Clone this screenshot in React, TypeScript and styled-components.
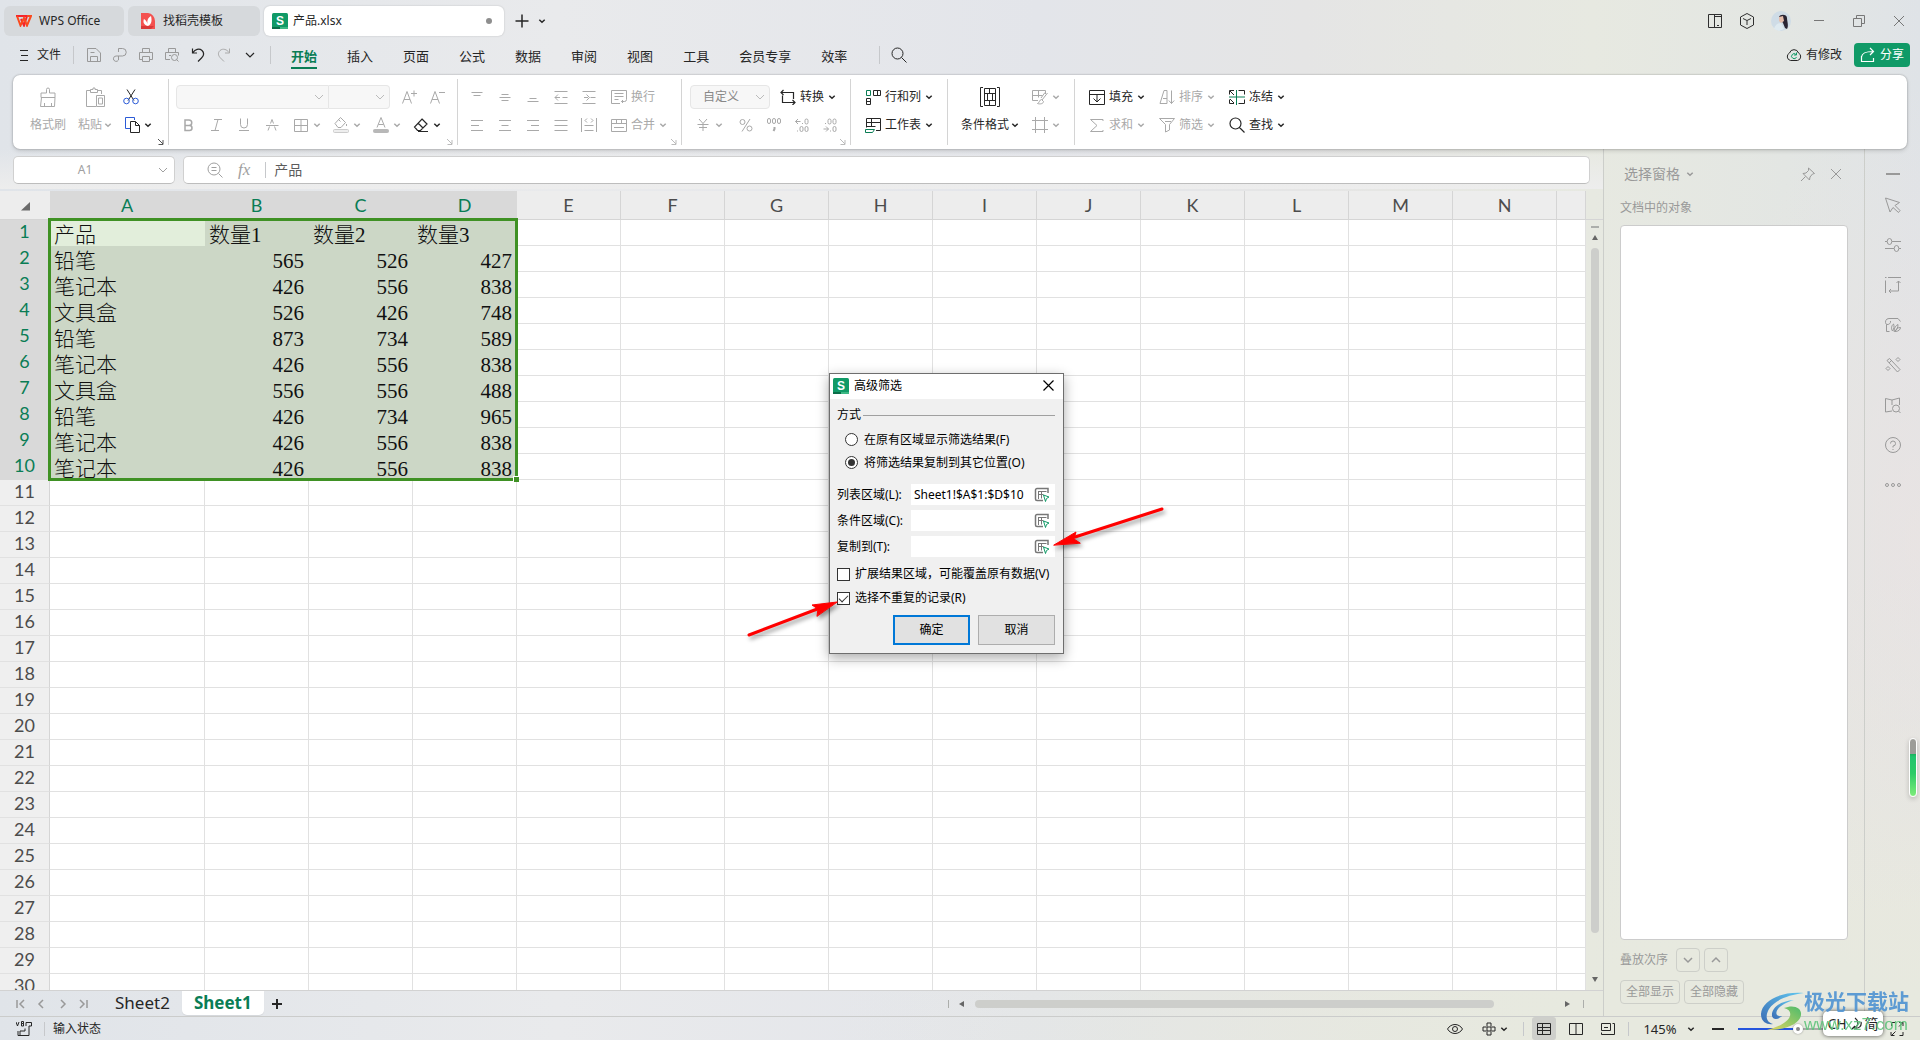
import React from "react";
import styled, { createGlobalStyle, css } from "styled-components";

const c = {
  ink: "#262626",
  soft: "#a9a9a9",
  line: "#d2d2d2",
  green: "#0a7d55",
  brand: "#109a67",
  grid: "#e1e1e1",
};
const sans = `"Noto Sans", "Noto Sans CJK SC", sans-serif`;

const Global = createGlobalStyle`
  *, *::before, *::after { box-sizing: border-box; }
  body { margin: 0; overflow: hidden; }
  button, input, select { font: inherit; color: inherit; margin: 0; padding: 0; border: 0; background: none; border-radius: 0; }
  button { cursor: pointer; }
  svg { display: block; flex: none; }
`;

/* ---------- icons ---------- */

type IconProps = { d?: string; color?: string; w?: number; h?: number; sw?: number; children?: React.ReactNode };
const Icon = ({ d, color = "currentColor", w = 16, h = 16, sw = 1, children }: IconProps) => (
  <svg width={w} height={h} viewBox={`0 0 ${w} ${h}`} fill="none" stroke={color} strokeWidth={sw} aria-hidden="true">
    {d && <path d={d} />}
    {children}
  </svg>
);

const Chevron = () => <Icon w={8} h={8} sw={1.5} d="M1.3 2.8L4 5.3l2.7-2.5" />;
const WideChevron = () => <Icon w={10} h={8} d="M1 2l4 4 4-4" />;

const p = {
  save: "M1.5 1.5h8.5l4.5 4.5v8.5h-13z M4.5 14.5v-5h7v5 M4.5 5.5h4",
  send: "M6.5 5V1.5h4a3.7 3.7 0 0 1 0 7.5H4.2a2.7 2.7 0 1 0 2.3 4V9",
  print: "M4.5 5.5v-4h7v4 M4.5 12.5h-3v-7h13v7h-3 M4.5 9.5h7v5h-7z",
  preview: "M4.5 5.5v-4h7v4 M6 12.5H1.5v-7h13v3 M5 8.5h2 M14.5 14.5l-2-2",
  undo: "M2.5 1.5v4.5h4.5 M3 5.5C5 2.5 9 1 12 3.5c3 3 1 6-.5 7.5L8 14.5",
  redo: "M13.5 1.5v4.5H9 M13 5.5C11 2.5 7 1 4 3.5c-3 3-1 6 .5 7.5L8 14.5",
  search: "M6.5 1a5.5 5.5 0 1 0 0 11 5.5 5.5 0 1 0 0-11z M10.5 10.5l5 5",
  top: "M2.5 3.5h11 M4.5 6.5h7",
  middle: "M2.5 8.5h11 M4.5 5.5h7 M4.5 11.5h7",
  bottom: "M2.5 12.5h11 M4.5 9.5h7",
  outdent: "M1.5 2.5h13 M1.5 14.5h13 M2 8.5h5 M9.5 8.5h5 M5 5.5l-3 3 3 3",
  indent: "M1.5 2.5h13 M1.5 14.5h13 M3 8.5h4 M9.5 8.5h5 M5.5 5.5l3 3-3 3",
  left: "M2 3.5h12 M2 8.5h8 M2 13.5h12",
  center: "M2 3.5h12 M4.5 8.5h7 M2 13.5h12",
  right: "M2 3.5h12 M6 8.5h8 M2 13.5h12",
  justify: "M1.5 3.5h13 M1.5 8.5h13 M1.5 13.5h13",
  spread: "M.5 1v14 M15.5 1v14 M3.5 8.5h9 M3.5 13.5h9 M6 1.5l-2 2 2 2 M10 1.5l2 2-2 2",
  wrap: "M9 14.5H.5v-13h15v9a2 2 0 0 1-2 2h-3 M12 11l-1.5 1.5L12 14 M3.5 4.5h9 M3.5 7.5h9 M3.5 10.5h4",
  merge: "M.5 2.5h15v12H.5z M.5 6.5h15 M5.5 2.5v4 M10.5 2.5v4 M3 10.5h10",
  convert: "M1 3.5h12.5v4 M3.5 1L1 3.5 3.5 6 M15 13.5H2.5V6.5 M12.5 11l2.5 2.5-2.5 2.5 M13.5 7v3",
  yen: "M4 2l4 4.5L12 2 M2.5 7.5h11 M8 6.5V14 M4 10.5h8",
  rowsB: "M8.5 1.5h7v5h-7z M12.5 1.5v5 M1.5 9.5h4v6h-4z M1.5 12.5h4",
  sheet: "M1.5 10.5V1.5h14v12H11 M1.5 5.5h14 M6.5 1.5v8 M1.5 9.5h9",
  fill: "M.5 1.5h15v14H.5z M.5 5.5h15 M8 6v7 M4.5 9.5L8 13l3.5-3.5",
  sort: "M5 1.5h3v13 M5 1.5L1 14.5h7 M4 9.5h4 M12.5 1.5v13 M9.8 11.5l2.7 3 2.7-3",
  sum: "M14 4V2.5H1.5L8 8.5l-6.5 6H14V13",
  funnel: "M.5 1.5h15l-5 6V13l-4 2V7.5z M6 4.5h6",
  crop: "M3.5 0v16 M12.5 0v16 M0 3.5h16 M0 12.5h16",
  borders: "M1.5 2.5h13v12h-13z M8 2.5v12 M1.5 8.5h13",
};

const SLogo = () => (
  <svg width="16" height="16" viewBox="0 0 16 16" aria-hidden="true">
    <rect width="16" height="16" rx="1.5" fill={c.brand} />
    <rect y="14" width="8" height="2" fill="#0a6e49" />
    <rect x="8" y="14" width="8" height="2" fill="#3db884" />
    <text x="8" y="11.5" textAnchor="middle" fontFamily="Liberation Sans, sans-serif" fontWeight="700" fontSize="12" fill="#fff">S</text>
  </svg>
);

/* ---------- shell ---------- */

const Shell = styled.div`
  height: 100vh;
  display: flex;
  flex-direction: column;
  font: 12px/16px ${sans};
  color: ${c.ink};
  background:
    radial-gradient(ellipse 220px 460px at 100% 52%, #ede4e1aa, transparent),
    radial-gradient(ellipse 1100px 520px at 100% 105%, #e7e9df 35%, transparent),
    linear-gradient(to right, #e0e4e9 0, #e9eaec 29%, #e3e5ea 54%, #e5e5e5 68%, #e7e9e1 83%, #e3e6e3 93%, #dfe3e7 100%);
`;

const TabBar = styled.header`
  display: flex;
  align-items: center;
  gap: 4px;
  height: 36px;
  padding: 6px 0 0 4px;
`;
const DocTab = styled.button<{ $w: number; $active?: boolean }>`
  width: ${(q) => q.$w}px;
  height: 30px;
  display: flex;
  align-items: center;
  gap: 7px;
  padding: 0 12px;
  border-radius: 6px;
  background: ${(q) => (q.$active ? "#fff" : "#d6d9dc")};
  ${(q) => q.$active && css`padding: 0 12px 0 8px; gap: 5px; box-shadow: 0 0 2px #0003;`}
`;
const Dot = styled.i`
  width: 6px;
  height: 6px;
  margin-left: auto;
  border-radius: 50%;
  background: #8e8e8e;
`;
const TabTools = styled.div`
  display: flex;
  align-items: center;
  gap: 8px;
  padding-left: 6px;
`;
const Plain = styled.button`
  display: flex;
  align-items: center;
  justify-content: center;
`;
const WindowTools = styled.div`
  display: flex;
  align-items: center;
  gap: 16px;
  margin-left: auto;
  padding-right: 9px;
  color: #2f2f2f;
`;
const Caption = styled(Plain)`
  width: 24px;
  color: #777;
`;

const MenuBar = styled.nav`
  display: flex;
  align-items: center;
  height: 39px;
  padding: 0 10px 1px 19px;
`;
const FileButton = styled(Plain)`
  gap: 8px;
`;
const Rule = styled.i<{ $l?: number; $r?: number; $h?: number }>`
  width: 1px;
  height: ${(q) => q.$h ?? 18}px;
  margin: 0 ${(q) => q.$r ?? 0}px 0 ${(q) => q.$l ?? 0}px;
  background: #c6c8cb;
`;
const QuickTools = styled.div`
  display: flex;
  gap: 10px;
`;
const Menus = styled.div`
  display: flex;
  gap: 30px;
  font-size: 13px;
`;
const MenuItem = styled.button<{ $on?: boolean }>`
  height: 28px;
  padding-top: 3px;
  border-bottom: 2px solid ${(q) => (q.$on ? c.green : "transparent")};
  ${(q) => q.$on && css`color: ${c.green}; font-weight: 700;`}
`;
const MenuRight = styled.div`
  display: flex;
  align-items: center;
  gap: 12px;
  margin-left: auto;
`;
const Changes = styled(Plain)`
  gap: 4px;
`;
const Share = styled(Plain)`
  width: 56px;
  height: 24px;
  gap: 4px;
  border-radius: 4px;
  background: ${c.brand};
  color: #fff;
`;

/* ---------- ribbon ---------- */

const Ribbon = styled.section`
  position: relative;
  z-index: 2;
  display: flex;
  height: 74px;
  margin: 0 13px;
  padding: 4px 0;
  border-radius: 7px;
  background: #fff;
  box-shadow: 0 0 2px #0005, 0 2px 4px #0002;
`;
const Group = styled.div<{ $pl: number; $w?: number }>`
  position: relative;
  display: flex;
  width: ${(q) => (q.$w ? q.$w + "px" : "auto")};
  padding: 4px 0 0 ${(q) => q.$pl}px;
  border-right: ${(q) => (q.$w ? "1px solid #d4d4d4" : "0")};
`;
const Rows = styled.div`
  display: flex;
  flex-direction: column;
`;
const Row = styled.div<{ $pl?: number }>`
  display: flex;
  align-items: center;
  height: 28px;
  padding-left: ${(q) => q.$pl ?? 0}px;
`;
const Tool = styled.button<{ $w?: number; $pl?: number; $on?: boolean }>`
  display: flex;
  align-items: center;
  gap: 4px;
  width: ${(q) => (q.$w ? q.$w + "px" : "auto")};
  height: 28px;
  padding-left: ${(q) => q.$pl ?? 0}px;
  white-space: nowrap;
  color: ${(q) => (q.$on ? c.ink : c.soft)};
`;
const Square = styled(Tool)`
  width: 28px;
  justify-content: center;
`;
const Tall = styled.button<{ $w: number; $on?: boolean }>`
  display: grid;
  grid-template-rows: 28px 28px;
  place-items: center;
  width: ${(q) => q.$w}px;
  color: ${(q) => (q.$on ? c.ink : c.soft)};
`;
const TallLabel = styled.span`
  display: flex;
  align-items: center;
  gap: 2px;
  white-space: nowrap;
`;
const Launcher = styled.button<{ $on?: boolean }>`
  position: absolute;
  right: 4px;
  bottom: 0;
  color: ${(q) => (q.$on ? "#555" : "#bbb")};
`;
const Combo = styled.label<{ $w: number; $side?: "l" | "r" }>`
  position: relative;
  display: flex;
  align-items: center;
  width: ${(q) => q.$w}px;
  height: 24px;
  border: 1px solid #e6e6e6;
  border-radius: ${(q) => (q.$side === "l" ? "4px 0 0 4px" : q.$side === "r" ? "0 4px 4px 0" : "4px")};
  border-left-width: ${(q) => (q.$side === "r" ? 0 : 1)}px;
  background: #f7f7f7;
  color: #bbb;
  select {
    appearance: none;
    width: 100%;
    height: 22px;
    padding-left: 12px;
    color: #888;
  }
  svg {
    position: absolute;
    right: 4px;
    pointer-events: none;
  }
`;

const Corner = ({ on }: { on?: boolean }) => (
  <Launcher $on={on} aria-label="更多设置">
    <Icon w={7} h={7} d="M1 1l5 5 M6 2v4.5H1.5" />
  </Launcher>
);

const RibbonBar = () => (
  <Ribbon>
    <Group $w={156} $pl={11}>
      <Tall $w={48}>
        <Icon w={18} h={20} d="M7.5 6V2.5a1.5 1.5 0 0 1 3 0V6h5.5v4.5H2V6z M2.5 10.5L1.5 19.5h14l.5-9 M5.5 19v-3 M12.5 19v-3" />
        格式刷
      </Tall>
      <Tall $w={46}>
        <Icon w={20} h={20} d="M11 19.5H1.5v-16h4 M12.5 3.5h4V7 M5.5 5.5v-3h2.5v-1.5h2v1.5h2.5v3z M11.5 8.5h8v11h-8z M13.5 11h4v6h-4z" />
        <TallLabel>粘贴<Chevron /></TallLabel>
      </Tall>
      <Rows>
        <Tool $on $pl={5} aria-label="剪切">
          <Icon>
            <path d="M4 .5l7 11 M12 .5L5 11.5" />
            <g stroke="#2b5bd7"><circle cx="3.5" cy="12" r="2.8" /><circle cx="12.5" cy="12" r="2.8" /></g>
          </Icon>
        </Tool>
        <Tool $on $pl={6} aria-label="复制">
          <Icon>
            <path d="M6 11.5H1.5V.5h9V3" stroke="#2b5bd7" />
            <path d="M6.5 4.5h5l4 4v7h-9z M11.5 4.5v4h4" />
          </Icon>
          <Chevron />
        </Tool>
      </Rows>
      <Corner on />
    </Group>

    <Group $w={289} $pl={5}>
      <Rows>
        <Row $pl={2}>
          <Combo $w={153} $side="l"><select aria-label="字体"><option /></select><WideChevron /></Combo>
          <Combo $w={61} $side="r"><select aria-label="字号"><option /></select><WideChevron /></Combo>
          <Row $pl={5}>
            <Square aria-label="增大字号"><Icon d="M1.5 14.5l4.5-12 4.5 12 M3 10.5h6 M10 4.5h6 M13 1.5v6" /></Square>
            <Square aria-label="减小字号"><Icon d="M1.5 14.5l4.5-12 4.5 12 M3 10.5h6 M10 3.5h6" /></Square>
          </Row>
        </Row>
        <Row>
          <Square aria-label="加粗"><Icon sw={1.5} d="M5 3h4a2.5 2.5 0 0 1 0 5.5H5z M5 8.5h4.5a2.5 2.5 0 0 1 0 5H5z" /></Square>
          <Square aria-label="倾斜"><Icon d="M6 2.5h8 M3 13.5h8 M10 2.5l-3 11" /></Square>
          <Square aria-label="下划线"><Icon d="M4.5 1.5v6a3.5 3.5 0 0 0 7 0v-6 M3 13.5h10" /></Square>
          <Square aria-label="删除线"><Icon d="M2 8.5h12.5 M4 13.5l1.5-4 M12 13.5l-1.5-4 M6.5 6.5L8 2.5l1.5 4" /></Square>
          <Tool $w={40} $pl={7} aria-label="边框"><Icon d={p.borders} /><Chevron /></Tool>
          <Tool $w={40} $pl={7} aria-label="填充颜色">
            <Icon><path d="M7.500.5l5 5-4.500 5h-3l-3-4z M5.500 2.500l2 2 M13.500 7v2" /><rect x=".5" y="12.5" width="15" height="3" rx="1" fill="#eee" stroke="#ccc" /></Icon><Chevron />
          </Tool>
          <Tool $w={40} $pl={7} aria-label="字体颜色">
            <Icon><path d="M4 10.500L8 .500l4 10 M5.500 7.500h5" /><rect x=".5" y="12.5" width="15" height="3" rx="1" fill="#b8b8b8" stroke="#b8b8b8" /></Icon><Chevron />
          </Tool>
          <Tool $on $w={40} $pl={7} aria-label="清除">
            <Icon d="M9 2l5 5-6.500 6.500h-3L1.500 10z M5 6l5 5 M5 14.500h10" sw={1.2} /><Chevron />
          </Tool>
        </Row>
      </Rows>
      <Corner />
    </Group>

    <Group $w={224} $pl={5}>
      <Rows>
        <Row>
          {[["顶端对齐", p.top], ["垂直居中", p.middle], ["底端对齐", p.bottom], ["减少缩进", p.outdent], ["增加缩进", p.indent]].map(([l, d]) => (
            <Square key={l} aria-label={l}><Icon d={d} /></Square>
          ))}
          <Tool $pl={8}><Icon d={p.wrap} />换行</Tool>
        </Row>
        <Row>
          {[["左对齐", p.left], ["居中", p.center], ["右对齐", p.right], ["两端对齐", p.justify], ["分散对齐", p.spread]].map(([l, d]) => (
            <Square key={l} aria-label={l}><Icon d={d} /></Square>
          ))}
          <Tool $pl={8}><Icon d={p.merge} />合并<Chevron /></Tool>
        </Row>
      </Rows>
      <Corner />
    </Group>

    <Group $w={169} $pl={8}>
      <Rows>
        <Row>
          <Combo $w={80}><select aria-label="数字格式"><option>自定义</option></select><WideChevron /></Combo>
          <Tool $on $pl={10}><Icon d={p.convert} sw={1.2} />转换<Chevron /></Tool>
        </Row>
        <Row>
          <Tool $w={42} $pl={5} aria-label="货币"><Icon d={p.yen} /><Chevron /></Tool>
          <Square aria-label="百分比"><Icon><circle cx="4.5" cy="5" r="2.5" /><circle cx="11.5" cy="11.5" r="2.5" /><path d="M12 2L4 14.5" /></Icon></Square>
          <Square aria-label="千位分隔"><Icon><rect x="1.5" y="1.5" width="3" height="5" rx="1.5" /><rect x="6.5" y="1.5" width="3" height="5" rx="1.5" /><rect x="11.5" y="1.5" width="3" height="5" rx="1.5" /><path d="M8.500 10v2l-1 2" strokeWidth="2" /></Icon></Square>
          <Square aria-label="增加小数"><Icon><path d="M1.500 4.500h5 M4 2L1.500 4.500 4 7 M8.500 6v1 M3.500 13.500v1" /><rect x="11" y="2" width="3" height="5" rx="1.5" /><rect x="6" y="9.5" width="3" height="5" rx="1.5" /><rect x="11" y="9.5" width="3" height="5" rx="1.5" /></Icon></Square>
          <Square aria-label="减少小数"><Icon><path d="M1.500 12h5 M4 9.500L6.500 12 4 14.500 M3.500 6v1 M8.500 13.500v1" /><rect x="6" y="2" width="3" height="5" rx="1.5" /><rect x="11" y="2" width="3" height="5" rx="1.5" /><rect x="11" y="9.5" width="3" height="5" rx="1.5" /></Icon></Square>
        </Row>
      </Rows>
      <Corner />
    </Group>

    <Group $w={97} $pl={14}>
      <Rows>
        <Tool $on><Icon><path d={p.rowsB} /><path d="M1.500 1.500h4v5h-4z" stroke={c.green} /></Icon>行和列<Chevron /></Tool>
        <Tool $on><Icon><path d={p.sheet} /><path d="M.500 12.500h9l-2 3h-7z" stroke={c.green} /></Icon>工作表<Chevron /></Tool>
      </Rows>
    </Group>

    <Group $w={127} $pl={12}>
      <Tall $w={60} $on>
        <Icon w={20} h={20} d="M3 .5H.5v19H3 M17 .5h2.5v19H17 M4.500 1.500h11v17h-11z M4.500 6.500h11 M4.500 13.500h11 M9.500 1.500v5 M12.500 6.500v7 M7.500 6.500v7 M9.500 13.500v5" />
        <TallLabel>条件格式<Chevron /></TallLabel>
      </Tall>
      <Rows>
        <Tool $pl={12} aria-label="表格样式"><Icon d="M6 11.500H.500v-10h13V5 M.500 6.500h10 M6.500 1.500v7 M15.500 4l-5.500 7 M13 3.500l-4 5.500 M9.500 10.500c-2 0-2 3.500-4 4 3 1 6 0 6-2z" /><Chevron /></Tool>
        <Tool $pl={12} aria-label="单元格样式"><Icon d={p.crop} /><Chevron /></Tool>
      </Rows>
    </Group>

    <Group $pl={14}>
      <Rows>
        <Row>
          <Tool $on $w={70}><Icon d={p.fill} />填充<Chevron /></Tool>
          <Tool $w={70}><Icon d={p.sort} />排序<Chevron /></Tool>
          <Tool $on $w={70}>
            <Icon><path d="M.500 5.500v-4h4.500 M1 2l4 4 M9.500 1.500h6v4 M.500 10.500v4h4.500 M1 10l4 4 M15.500 10.500v4h-6" /><path d="M0 8h16 M7.500 1v15" stroke={c.green} /></Icon>冻结<Chevron />
          </Tool>
        </Row>
        <Row>
          <Tool $w={70}><Icon d={p.sum} />求和<Chevron /></Tool>
          <Tool $w={70}><Icon d={p.funnel} />筛选<Chevron /></Tool>
          <Tool $on $w={70}><Icon d={p.search} sw={1.2} />查找<Chevron /></Tool>
        </Row>
      </Rows>
    </Group>
  </Ribbon>
);

/* ---------- work area ---------- */

const Body = styled.div`
  flex: 1;
  min-height: 0;
  display: flex;
`;
const Work = styled.main`
  flex: 1;
  min-width: 0;
  display: flex;
  flex-direction: column;
  background: linear-gradient(to bottom, transparent, #ededed 40px, transparent 40px);
`;
const FormulaBar = styled.div`
  display: flex;
  gap: 8px;
  height: 42px;
  padding: 7px 13px;
`;
const Field = styled.label<{ $w?: number }>`
  position: relative;
  display: flex;
  align-items: center;
  ${(q) => (q.$w ? `width: ${q.$w}px;` : "flex: 1;")}
  height: 28px;
  border: 1px solid #d0d0d0;
  border-bottom-color: #bdbdbd;
  border-radius: 5px;
  background: #fff;
  color: #a0a0a0;
  input { min-width: 0; flex: 1; outline: 0; }
`;
const NameInput = styled.input`
  text-align: center;
  padding-right: 18px;
`;
const FormulaInput = styled.input`
  font-size: 14px;
  line-height: 20px;
  color: #5c5c5c;
`;
const FieldTools = styled.span`
  display: flex;
  align-items: center;
  gap: 15px;
  padding: 0 8px 0 23px;
`;
const Fx = styled.em`
  font: italic 17px/16px "Liberation Serif", serif;
`;
const NameArrow = styled.span`
  position: absolute;
  right: 6px;
`;

const SheetArea = styled.div`
  flex: 1;
  min-height: 0;
  display: flex;
  border-bottom: 1px solid ${c.line};
`;
const Grid = styled.div`
  position: relative;
  flex: 1;
  min-width: 0;
  overflow: hidden;
`;
const Table = styled.table`
  width: 100%;
  table-layout: fixed;
  border-collapse: separate;
  border-spacing: 0;
  background: #fff;
`;
const HeadCell = styled.th<{ $sel?: boolean }>`
  height: 29px;
  padding: 0;
  border-right: 1px solid ${(q) => (q.$sel ? "#d9d9d9" : "#d5d5d5")};
  border-bottom: 1px solid #d5d5d5;
  background: ${(q) => (q.$sel ? "#d9d9d9" : "#ededed")};
  color: ${(q) => (q.$sel ? c.green : "#4c4c4c")};
  font: 400 18px/24px Lato, sans-serif;
`;
const RowHead = styled.th<{ $sel?: boolean }>`
  height: 26px;
  padding: 0 0 3px;
  border-right: 1px solid #d5d5d5;
  background: ${(q) => (q.$sel ? "#d9d9d9" : "#efefef")};
  border-bottom: 1px solid ${(q) => (q.$sel ? "#d9d9d9" : c.grid)};
  color: ${(q) => (q.$sel ? c.green : "#4c4c4c")};
  font: 400 18px/22px Lato, sans-serif;
`;
const CornerHead = styled(HeadCell)`
  border-right-color: #ededed;
  svg { margin: 2px 0 0 21px; }
`;
const Cell = styled.td<{ $fill?: string; $num?: boolean }>`
  height: 26px;
  padding: 5px 4px 0;
  overflow: hidden;
  border-right: 1px solid ${(q) => q.$fill ?? c.grid};
  border-bottom: 1px solid ${(q) => q.$fill ?? c.grid};
  background: ${(q) => q.$fill ?? "#fff"};
  color: #111;
  font: 300 21px/20px "Liberation Serif", "Noto Sans CJK SC", serif;
  text-align: ${(q) => (q.$num ? "right" : "left")};
  white-space: nowrap;
`;
const Selection = styled.div`
  position: absolute;
  left: 48px;
  top: 27px;
  width: 470px;
  height: 263px;
  border: 3px solid #3f9124;
  pointer-events: none;
  &::after {
    content: "";
    position: absolute;
    right: -4px;
    bottom: -4px;
    width: 6px;
    height: 6px;
    border: solid #fff;
    border-width: 1px 0 0 1px;
    background: #3f9124;
  }
`;
const VScroll = styled.div`
  display: flex;
  flex-direction: column;
  align-items: center;
  gap: 7px;
  width: 17px;
  margin-top: 28px;
  padding: 6px 0 8px;
  border-top: 1px solid #d5d5d5;
`;
const Thumb = styled.div<{ $v?: boolean }>`
  ${(q) => (q.$v ? "width: 8px; flex: 0 1 685px;" : "height: 8px; width: 519px;")}
  border-radius: 4px;
  background: #cdcecb;
`;
const Dash = styled.i<{ $v?: boolean }>`
  width: ${(q) => (q.$v ? 1 : 8)}px;
  height: ${(q) => (q.$v ? 8 : 2)}px;
  flex: none;
  background: #acaeab;
`;
const Push = styled.i`
  flex: 1;
`;
const Tri = ({ d }: { d: string }) => (
  <svg width="6" height="6" viewBox="0 0 6 6" fill="#666" aria-hidden="true"><path d={d} /></svg>
);

const SheetBar = styled.div`
  display: flex;
  align-items: center;
  height: 25px;
`;
const SheetNav = styled.div`
  display: flex;
  gap: 11px;
  padding: 0 15px 0 15px;
  color: #999;
`;
const SheetTab = styled.button<{ $on?: boolean }>`
  align-self: flex-start;
  height: 24px;
  padding: 0 12px;
  border-radius: 0 0 5px 5px;
  font-size: 17px;
  line-height: 22px;
  ${(q) => q.$on && css`background: #fff; color: ${c.green}; font-weight: 700; box-shadow: 0 1px 1px #0001;`}
`;
const AddSheet = styled(Plain)`
  padding: 0 8px;
`;
const HScroll = styled.div`
  display: flex;
  align-items: center;
  gap: 10px;
  margin-left: auto;
  padding-right: 19px;
`;
const HEnd = styled.span`
  display: flex;
  align-items: center;
  gap: 13px;
  padding-left: 60px;
`;

const DATA: (string | number)[][] = [
  ["产品", "数量1", "数量2", "数量3"],
  ["铅笔", 565, 526, 427],
  ["笔记本", 426, 556, 838],
  ["文具盒", 526, 426, 748],
  ["铅笔", 873, 734, 589],
  ["笔记本", 426, 556, 838],
  ["文具盒", 556, 556, 488],
  ["铅笔", 426, 734, 965],
  ["笔记本", 426, 556, 838],
  ["笔记本", 426, 556, 838],
];
const COLS = "ABCDEFGHIJKLMN".split("");

const SheetGrid = () => (
  <Grid>
    <Table>
      <colgroup>
        <col width={50} />
        <col width={155} />
        {COLS.slice(1).map((k) => <col key={k} width={104} />)}
        <col />
      </colgroup>
      <thead>
        <tr>
          <CornerHead aria-label="全选">
            <svg width="9" height="9" viewBox="0 0 9 9" fill="#6a6a6a" aria-hidden="true"><path d="M9 0v8.500H0z" /></svg>
          </CornerHead>
          {COLS.map((k, i) => <HeadCell key={k} $sel={i < 4} scope="col">{k}</HeadCell>)}
          <HeadCell aria-label="O" />
        </tr>
      </thead>
      <tbody>
        {Array.from({ length: 30 }, (_, r) => (
          <tr key={r}>
            <RowHead $sel={r < 10} scope="row">{r + 1}</RowHead>
            {COLS.concat("O").map((k, i) => {
              const v = DATA[r]?.[i];
              const fill = v === undefined ? undefined : r + i === 0 ? "#e2eedb" : "#ccd7c6";
              return <Cell key={k} $fill={fill} $num={typeof v === "number"}>{v}</Cell>;
            })}
          </tr>
        ))}
      </tbody>
    </Table>
    <Selection />
  </Grid>
);

/* ---------- selection pane & side rail ---------- */

const Pane = styled.aside`
  width: 262px;
  display: flex;
  flex-direction: column;
  padding: 13px 16px 12px 16px;
  border: solid #ccceca;
  border-width: 0 1px;
  color: #999;
`;
const PaneHead = styled.div`
  display: flex;
  align-items: center;
  gap: 6px;
  height: 24px;
  padding: 0 4px;
  font-size: 14px;
`;
const PaneTools = styled.span`
  display: flex;
  gap: 12px;
  margin-left: auto;
`;
const PaneLabel = styled.div`
  padding: 14px 0 9px;
`;
const ObjectList = styled.div`
  flex: 1;
  border: 1px solid #ccc;
  border-radius: 4px;
  background: #fff;
`;
const PaneRow = styled.div`
  display: flex;
  align-items: center;
  gap: 4px;
  margin-top: 8px;
`;
const OrderLabel = styled.span`
  margin-right: 4px;
`;
const PaneButton = styled(Plain)<{ $w: number }>`
  width: ${(q) => q.$w}px;
  height: 24px;
  border: 1px solid #cdcfc9;
  border-radius: 4px;
`;
const Rail = styled.aside`
  width: 55px;
  display: flex;
  flex-direction: column;
  align-items: center;
  gap: 16px;
  padding-top: 16px;
  color: #999;
`;
const RailList = styled.div`
  display: flex;
  flex-direction: column;
  gap: 24px;
`;

const RAIL: [string, React.ReactNode][] = [
  ["选择", <Icon d="M.500 1l14 4.500-4.500 3 5 5-1.500 2-5.500-5-3 4.500z" />],
  ["属性", <Icon><path d="M0 4.500h2 M7 4.500h9 M0 11.500h9 M14 11.500h2" /><ellipse cx="4.5" cy="4.5" rx="2.3" ry="3" /><ellipse cx="11.5" cy="11.5" rx="2.3" ry="3" /></Icon>],
  ["分析", <Icon d="M.500 3.500V16 M0 .500h1.500 M3 .500h13 M13.500 4v10H4 M11.500 6l2-2 2 2 M6 12l-2 2 2 2" />],
  ["图表", <Icon d="M1.500 7.500V14.500h3 M1.500 7.500A3.500 3.500 0 0 1 4 1.500h9l2.500 3 M1.500 7.500C4 8 6 6 5.500 4 M7.500 14c-2-3-.500-6 1-7 1 2 .500 5-1 7z M9 14.500c0-4 2-6 4-7 0 3-1 6-4 7z M10 14.500c1-3 3-4 5.500-4 0 2-2 4-5.500 4z" />],
  ["工具", <Icon d="M2 3.500L4.500 1.500 15 12.500 12.500 15z M4 6l3-3 M11 2.500l2-2 2 2-2 2z M1 11.500l2-2 2 2-2 2z" />],
  ["资料", <Icon><path d="M7 14L.500 15V1.500L7 3v5 M7 3l7.500-2v7" /><circle cx="11" cy="11.5" r="3.5" /><path d="M13.500 14l2 2" /></Icon>],
  ["帮助", <Icon><circle cx="8" cy="8" r="7.5" /><path d="M5.500 6.500a2.500 2.500 0 1 1 2.500 2.500v1.500 M8 12v1" /></Icon>],
  ["更多", <Icon><circle cx="2" cy="8" r="1.5" /><circle cx="8" cy="8" r="1.5" /><circle cx="14" cy="8" r="1.5" /></Icon>],
];

/* ---------- status bar ---------- */

const Status = styled.footer`
  display: flex;
  align-items: center;
  height: 24px;
  padding: 0 15px 0 16px;
  border-top: 1px solid #cbcccb;
`;
const StatusRight = styled.div`
  display: flex;
  align-items: center;
  margin-left: auto;
`;
const StatusTool = styled(Plain)<{ $w: number; $on?: boolean }>`
  width: ${(q) => q.$w}px;
  height: 23px;
  gap: 4px;
  border-radius: 3px;
  background: ${(q) => (q.$on ? "#cecfcb" : "none")};
`;
const ZoomValue = styled(StatusTool)`
  gap: 10px;
  font-size: 13px;
`;
const Zoom = styled.input`
  appearance: none;
  width: 120px;
  height: 12px;
  margin: 0 31px 0 8px;
  background: linear-gradient(to right, #2555dd 50%, #a9aaa8 50%) center / 100% 2px no-repeat;
  &::-webkit-slider-thumb {
    appearance: none;
    width: 10px;
    height: 10px;
    border-radius: 50%;
    border: 3px solid #fff;
    background: #888;
    box-shadow: 0 0 2px #0006;
  }
`;

/* ---------- dialog ---------- */

const Canvas = styled.div`
  position: absolute;
  z-index: 5;
  left: calc(50% - 230px);
  top: calc(50% - 160px);
  width: 450px;
  height: 310px;
`;
const Dialog = styled.form`
  position: absolute;
  left: 99px;
  top: 13px;
  width: 235px;
  border: 1px solid #6e6e6e;
  background: #f0f0f0;
  color: #000;
  box-shadow: 0 4px 12px #0005;
`;
const DialogTitle = styled.div`
  display: flex;
  align-items: center;
  gap: 5px;
  height: 25px;
  padding: 0 9px 2px 3px;
  background: #fff;
`;
const CloseX = styled(Plain)`
  margin-left: auto;
`;
const DialogBody = styled.div`
  display: flex;
  flex-direction: column;
  padding: 7px 8px 8px 7px;
`;
const Legend = styled.div`
  display: flex;
  align-items: center;
  gap: 2px;
  height: 18px;
  &::after { content: ""; flex: 1; height: 1px; background: #a0a0a0; }
`;
const Choices = styled.div<{ $pl?: number; $h: number }>`
  padding: 4px 0 4px ${(q) => q.$pl ?? 0}px;
  label {
    display: flex;
    align-items: center;
    gap: 5px;
    height: ${(q) => q.$h}px;
    white-space: nowrap;
  }
`;
const Mark = styled.input`
  appearance: none;
  flex: none;
  display: grid;
  place-items: center;
  width: 13px;
  height: 13px;
  border: 1px solid #333;
  background: #fff;
  &[type="radio"] { border-radius: 50%; margin-right: 1px; }
  &[type="radio"]:checked::after { content: ""; width: 7px; height: 7px; border-radius: 50%; background: #333; }
  &[type="checkbox"]:checked::after { content: ""; width: 9px; height: 5px; border: solid #333; border-width: 0 0 1px 1px; transform: translateY(-1px) rotate(-45deg); }
`;
const Ranges = styled.div`
  display: flex;
  flex-direction: column;
  gap: 5px;
  padding: 6px 0 1px;
`;
const RangeRow = styled.div`
  display: flex;
  align-items: center;
  height: 21px;
  label { width: 74px; white-space: nowrap; }
`;
const RangeBox = styled.span`
  display: flex;
  align-items: center;
  flex: 1;
  min-width: 0;
  height: 21px;
  padding: 0 5px 0 3px;
  background: #fff;
  input { flex: 1; min-width: 0; outline: 0; }
`;
const Actions = styled.div`
  display: flex;
  justify-content: flex-end;
  gap: 8px;
  padding-top: 1px;
`;
const DialogButton = styled.button<{ $main?: boolean }>`
  width: 77px;
  height: 30px;
  border: ${(q) => (q.$main ? "2px solid #0078d7" : "1px solid #adadad")};
  background: #e1e1e1;
`;
const Arrows = styled.svg`
  position: absolute;
  inset: 0;
  pointer-events: none;
  filter: drop-shadow(2px 3px 2px #0006);
`;

const PickIcon = () => (
  <Icon>
    <path d="M9 13.500H3a1.500 1.500 0 0 1-1.500-1.500V3A1.500 1.500 0 0 1 3 1.500h11V6" stroke="#777" strokeWidth="1.5" />
    <path d="M4.500 12V4 M4.500 4.500h8 M7.500 4.500v7 M4.500 7.500h5" stroke="#777" />
    <path d="M9.500 8l5.500 2-2.500 1.500-1 3z" stroke={c.brand} fill="#fff" />
  </Icon>
);

const AdvancedFilter = () => (
  <Canvas>
    <Dialog onSubmit={(e) => e.preventDefault()}>
      <DialogTitle>
        <SLogo />
        高级筛选
        <CloseX type="button" aria-label="关闭"><Icon w={11} h={11} d="M.500.500l10 10 M10.500.500l-10 10" sw={1.2} /></CloseX>
      </DialogTitle>
      <DialogBody>
        <Legend>方式</Legend>
        <Choices $pl={8} $h={23}>
          <label><Mark type="radio" name="mode" />在原有区域显示筛选结果(F)</label>
          <label><Mark type="radio" name="mode" defaultChecked />将筛选结果复制到其它位置(O)</label>
        </Choices>
        <Ranges>
          {[["list", "列表区域(L):", "Sheet1!$A$1:$D$10"], ["cond", "条件区域(C):", ""], ["dest", "复制到(T):", ""]].map(([id, l, v]) => (
            <RangeRow key={id}>
              <label htmlFor={id}>{l}</label>
              <RangeBox>
                <input id={id} defaultValue={v} />
                <Plain type="button" aria-label="选取区域"><PickIcon /></Plain>
              </RangeBox>
            </RangeRow>
          ))}
        </Ranges>
        <Choices $h={24}>
          <label><Mark type="checkbox" />扩展结果区域，可能覆盖原有数据(V)</label>
          <label><Mark type="checkbox" defaultChecked />选择不重复的记录(R)</label>
        </Choices>
        <Actions>
          <DialogButton $main>确定</DialogButton>
          <DialogButton type="button">取消</DialogButton>
        </Actions>
      </DialogBody>
    </Dialog>
    <Arrows width="450" height="310" viewBox="0 0 450 310" aria-hidden="true">
      <g fill="#f00" stroke="#f00" strokeLinecap="round">
        <path d="M432 149L345 177" strokeWidth="3" />
        <path d="M324 185l22-13-2 7 6 4z" />
        <path d="M19 275L90 248" strokeWidth="3" />
        <path d="M107 242l-25 3 6 4-1 7z" />
      </g>
    </Arrows>
  </Canvas>
);

/* ---------- floating overlays ---------- */

const Watermark = styled.div`
  position: absolute;
  z-index: 6;
  right: 11px;
  bottom: 3px;
  display: flex;
  align-items: center;
  pointer-events: none;
`;
const MarkText = styled.div`
  color: #4f93d2;
  opacity: 0.9;
  font: 700 21px/26px "Noto Sans CJK SC", sans-serif;
  white-space: nowrap;
  small {
    display: block;
    color: #5fc47c;
    font: 400 17px/24px "Liberation Sans", sans-serif;
  }
`;
const Ime = styled.div`
  position: absolute;
  z-index: 5;
  right: 37px;
  bottom: 4px;
  display: flex;
  align-items: center;
  justify-content: center;
  gap: 3px;
  width: 60px;
  height: 25px;
  border-radius: 5px;
  background: #fff;
  box-shadow: 0 0 4px #000a;
  font-size: 14px;
`;
const Meter = styled.div`
  position: absolute;
  right: 3px;
  top: 738px;
  width: 8px;
  height: 59px;
  border: 1px solid #fff;
  border-radius: 4px;
  background: linear-gradient(to bottom, #9c9c98 15px, #17b35c 15px, #22c46e 18px, #2bcb66 60%, #7dec7a);
  box-shadow: 0 2px 5px #0003;
`;

export default function App() {
  return (
    <Shell>
      <Global />
      <TabBar>
        <DocTab $w={120}>
          <Icon sw={2} h={12}><path d="M0 1h11L8 10.500 5 4" stroke="#f5222d" /><path d="M1 1l3.500 9.500L8 3l3 7.500L15 1h-4" stroke="#fb4a1d" /></Icon>
          WPS Office
        </DocTab>
        <DocTab $w={132}>
          <svg width="16" height="16" viewBox="0 0 16 16" aria-hidden="true">
            <path d="M1 0h7a8 8 0 0 1 7 8v8H1z" fill="#f4514f" /><path d="M1 13h13l-3 3H1z" fill="#d93838" />
            <path d="M8 13C3 12 3 8 4 6c2 1 3 3 3.500 5C7 7 8 5 11 3c1 4 1 8-3 10z" fill="#fff" />
          </svg>
          找稻壳模板
        </DocTab>
        <DocTab $w={240} $active><SLogo />产品.xlsx<Dot /></DocTab>
        <TabTools>
          <Plain aria-label="新建"><Icon sw={1.5} d="M8 1.500v13 M1.500 8h13" /></Plain>
          <Plain aria-label="标签列表"><Chevron /></Plain>
        </TabTools>
        <WindowTools>
          <Plain aria-label="布局"><Icon d="M1.500 1.500h13v13h-13z M7.500 1.500v13 M7.500 3.500h7 M10 12.500h2" /></Plain>
          <Plain aria-label="应用"><Icon d="M8 .500l6.500 3.500v8L8 15.500 1.500 12V4z M4 5.500l4 2 4-2 M8 7.500V12" /></Plain>
          <Plain aria-label="账号">
            <svg width="20" height="20" viewBox="0 0 20 20" aria-hidden="true">
              <circle cx="10" cy="10" r="10" fill="#cfdce6" />
              <path d="M8 6c1-3 8-3 8 1 0 3 2 8 0 11l-2-1-2-5z" fill="#2a2533" /><path d="M8 6l4-1 1 5-3 2-2-2z" fill="#e6bfae" />
              <path d="M3 18c1-4 4-6 7-6l3 6-5 2z" fill="#dfeaf0" />
            </svg>
          </Plain>
          <Caption aria-label="最小化"><Icon w={12} h={12} d="M1 5.500h10" /></Caption>
          <Caption aria-label="还原"><Icon w={12} h={12} d="M.500 3.500h8v8h-8z M3.500 3V.500h8v8H9" /></Caption>
          <Caption aria-label="关闭窗口"><Icon w={12} h={12} d="M1 1l10 10 M11 1L1 11" /></Caption>
        </WindowTools>
      </TabBar>

      <MenuBar>
        <FileButton><Icon w={10} h={12} d="M1 1.500h8 M2 6.500h7 M1 11.500h8" />文件</FileButton>
        <Rule $l={12} $r={12} />
        <QuickTools>
          {([["保存", p.save], ["输出", p.send], ["打印", p.print]] as const).map(([l, d]) => (
            <Plain key={l} aria-label={l}><Icon d={d} color="#999" /></Plain>
          ))}
          <Plain aria-label="打印预览"><Icon color="#999"><path d={p.preview} /><circle cx="10.5" cy="10.5" r="3" /></Icon></Plain>
          <Plain aria-label="撤销"><Icon d={p.undo} sw={1.2} /></Plain>
          <Plain aria-label="恢复"><Icon d={p.redo} color="#aaa" /></Plain>
          <Plain aria-label="更多"><Icon d="M4 6l4 4 4-4" sw={1.2} /></Plain>
        </QuickTools>
        <Rule $l={12} $r={20} />
        <Menus>
          {["开始", "插入", "页面", "公式", "数据", "审阅", "视图", "工具", "会员专享", "效率"].map((m, i) => (
            <MenuItem key={m} $on={i === 0}>{m}</MenuItem>
          ))}
        </Menus>
        <Rule $l={32} $r={11} />
        <Plain aria-label="搜索"><Icon d={p.search} /></Plain>
        <MenuRight>
          <Changes>
            <Icon><path d="M4.500 13.500a4 4 0 0 1-1-7.500 4.700 4.700 0 0 1 9 0 4 4 0 0 1-1 7.500z" /><path d="M10 7.500A2.500 2.500 0 1 0 10.500 10 M10.500 5.500v2.500H8" stroke={c.brand} /></Icon>
            有修改
          </Changes>
          <Share><Icon d="M1.500 9v5.500h12V11 M1.500 10C2 6 5 4.500 13 4.500 M10 1l3.500 3.500L10 8" sw={1.2} />分享</Share>
        </MenuRight>
      </MenuBar>

      <RibbonBar />

      <Body>
        <Work>
          <FormulaBar>
            <Field $w={162}><NameInput aria-label="名称框" defaultValue="A1" size={6} /><NameArrow><WideChevron /></NameArrow></Field>
            <Field>
              <FieldTools>
                <Icon><circle cx="7" cy="7" r="6" /><path d="M11.500 11.500l4 4 M4.500 5.500h5 M4.500 8.500h5" /></Icon>
                <Fx>fx</Fx>
                <Rule $h={16} />
              </FieldTools>
              <FormulaInput aria-label="编辑栏" defaultValue="产品" />
            </Field>
          </FormulaBar>
          <SheetArea>
            <SheetGrid />
            <VScroll>
              <Dash />
              <Tri d="M3 0l3 5H0z" />
              <Thumb $v />
              <Push />
              <Tri d="M3 6L0 1h6z" />
            </VScroll>
          </SheetArea>
          <SheetBar>
            <SheetNav>
              {["M2 1v8 M9 1L5 5l4 4", "M7 1L3 5l4 4", "M4 1l4 4-4 4", "M2 1l4 4-4 4 M9 1v8"].map((d, i) => (
                <Plain key={d} aria-label={["首个", "上一个", "下一个", "末个"][i]}><Icon w={10} h={10} sw={1.5} d={d} /></Plain>
              ))}
            </SheetNav>
            <SheetTab>Sheet2</SheetTab>
            <SheetTab $on>Sheet1</SheetTab>
            <AddSheet aria-label="新建工作表"><Icon w={10} h={10} sw={2} d="M5 0v10 M0 5h10" /></AddSheet>
            <HScroll>
              <Dash $v />
              <Tri d="M0 3l5-3v6z" />
              <Thumb />
              <HEnd><Tri d="M6 3L1 0v6z" /><Dash $v /></HEnd>
            </HScroll>
          </SheetBar>
        </Work>

        <Pane>
          <PaneHead>
            选择窗格<Chevron />
            <PaneTools>
              <Plain aria-label="固定"><Icon d="M8.500 2l6 5.500-2 .500-2.500 3-.500 3L3 7.500 6 7l2.500-2.500z M5.500 10.500L1 15" /></Plain>
              <Plain aria-label="关闭窗格"><Icon d="M3 3l10 10 M13 3L3 13" /></Plain>
            </PaneTools>
          </PaneHead>
          <PaneLabel>文档中的对象</PaneLabel>
          <ObjectList />
          <PaneRow>
            <OrderLabel>叠放次序</OrderLabel>
            <PaneButton $w={24} aria-label="下移"><Icon w={10} h={10} sw={1.5} d="M1 3l4 4 4-4" /></PaneButton>
            <PaneButton $w={24} aria-label="上移"><Icon w={10} h={10} sw={1.5} d="M1 7l4-4 4 4" /></PaneButton>
          </PaneRow>
          <PaneRow>
            <PaneButton $w={60}>全部显示</PaneButton>
            <PaneButton $w={60}>全部隐藏</PaneButton>
          </PaneRow>
        </Pane>

        <Rail>
          <Plain aria-label="收起"><Icon sw={2} d="M1 9h14" /></Plain>
          <RailList>
            {RAIL.map(([l, icon]) => <Plain key={l} aria-label={l}>{icon}</Plain>)}
          </RailList>
        </Rail>
      </Body>

      <Status>
        <Plain aria-label="宏"><Icon d="M0 1l1.500 4L3 1 M5.500.500H7.500v2H5.500z M5.500 2.500h2v2.500H5.500z M10 5V1.500h5.500V5H13v9.500H4V10h5V7.500 M2 10v4.500h2" /></Plain>
        <Rule $l={12} $r={8} $h={14} />
        输入状态
        <StatusRight>
          <StatusTool $w={24} aria-label="阅读模式"><Icon><path d="M.500 8C4 2 12 2 15.500 8 12 14 4 14 .500 8z" /><circle cx="8" cy="8" r="2.5" /></Icon></StatusTool>
          <StatusTool $w={56} aria-label="聚光灯"><Icon w={14} d="M5 5.500V2h4v3.500 M5 10.500V14h4v-3.500 M4.500 6H1v4h3.500 M9.500 6H13v4H9.500 M5 6h4v4H5z" /><Chevron /></StatusTool>
          <Rule $h={14} $r={8} />
          <StatusTool $w={24} $on aria-label="普通视图"><Icon d="M1.500 2.500h13v11h-13z M1.500 6.500h13 M6.500 2.500v11 M1.500 9.500h13" /></StatusTool>
          <StatusTool $w={40} aria-label="分页预览"><Icon d="M1.500 2.500h13v11h-13z M8 2.500v11" /></StatusTool>
          <StatusTool $w={24} aria-label="页面布局"><Icon d="M1.500 9.500v-7h9v7z M12.500 2.500h2v11h-13v-2 M4 6.500h4" /></StatusTool>
          <Rule $h={14} $l={8} $r={3} />
          <ZoomValue $w={74}>145%<Chevron /></ZoomValue>
          <StatusTool $w={24} aria-label="缩小"><Icon w={12} h={12} sw={2} d="M0 6h12" /></StatusTool>
          <Zoom type="range" aria-label="缩放" defaultValue={50} />
          <Plain aria-label="全屏"><Icon d="M6 1.500H2.500V5 M10 1.500h4V5 M2 11v3.500h3.500 M14 11v3.500h-3.500 M14 1.500l-4 4 M2.500 14.500l4-4" /></Plain>
        </StatusRight>
      </Status>

      <AdvancedFilter />
      <Meter />
      <Ime>
        CH
        <Icon w={12} h={14} d="M5 1c4 3 4 8-1 10 5 1 8-2 7-6 M2 12l3-3" sw={1.2} />
        简
      </Ime>
      <Watermark>
        <svg width="44" height="40" viewBox="0 0 44 40" aria-hidden="true">
          <defs>
            <linearGradient id="wb" x1="0" y1="1" x2="1" y2="0"><stop offset="0" stopColor="#3a6cb4" /><stop offset="1" stopColor="#62c8f0" /></linearGradient>
            <linearGradient id="wg" x1="0" y1="1" x2="1" y2="0"><stop offset="0" stopColor="#e3d660" /><stop offset="1" stopColor="#4dbb6c" /></linearGradient>
          </defs>
          <path d="M44 1C22-1 2 8 1 22c0 8 6 11 12 10C6 30 5 24 9 17 15 8 28 3 44 1z" fill="url(#wb)" />
          <path d="M34 8C20 9 11 16 12 24c1 4 6 4 10 0-6 1-7-3-4-7 3-4 9-7 16-9z" fill="url(#wb)" />
          <path d="M24 16c10-4 18 0 17 7-1 8-13 15-34 15 12-3 21-8 23-14 1-4-1-7-6-8z" fill="url(#wg)" />
        </svg>
        <MarkText>极光下载站<small>www.xz7.com</small></MarkText>
      </Watermark>
    </Shell>
  );
}
